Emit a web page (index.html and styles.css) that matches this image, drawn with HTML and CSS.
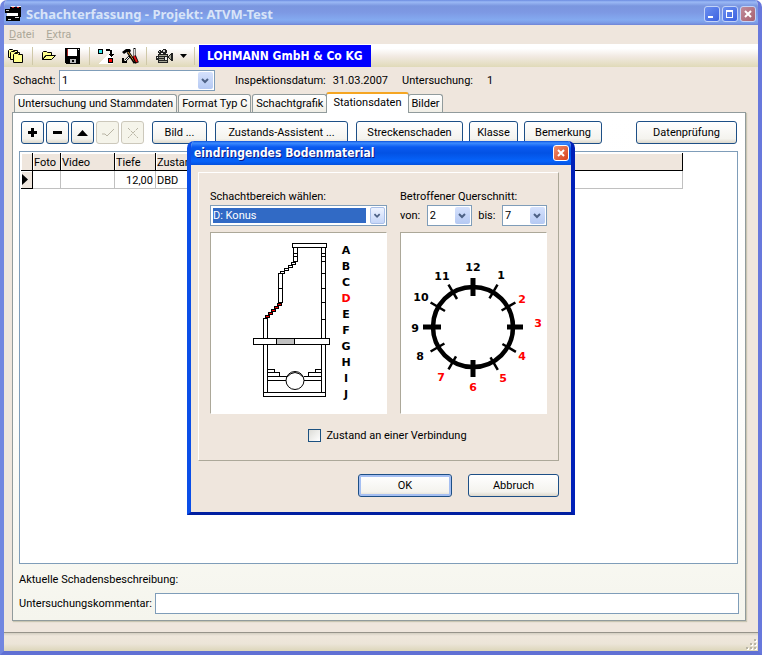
FILE: index.html
```html
<!DOCTYPE html>
<html lang="de">
<head>
    <meta charset="UTF-8">
    <meta name="viewport" content="width=device-width, initial-scale=1.0">
    <title>Schachterfassung - Projekt: ATVM-Test</title>
    <link rel="stylesheet" href="styles.css">
</head>
<body>
    <div class="window">
        <header class="titlebar">
            <svg class="app-icon" width="17" height="16" viewBox="0 0 17 16" shape-rendering="crispEdges">
                <path d="M5 1h11v3H5zM0 3h16v4H0z" fill="#000"/>
                <path d="M6 0h4v1H6zM12 0h4v1h-4z" fill="#eee"/>
                <path d="M7 1h2v1H7zM12 1h2v1h-2z" fill="#d22"/>
                <path d="M1 4h3v1H1z" fill="#ccc"/>
                <path d="M2 7h11v3H2z" fill="#fff"/>
                <path d="M13 7h3v4h-3z" fill="#000"/>
                <path d="M1 10h14v5H1z" fill="#000"/>
                <path d="M10 11h4v1h-4zM3 13h3v1H3z" fill="#ddd"/>
            </svg>
            <h1>Schachterfassung - Projekt: ATVM-Test</h1>
            <div class="window-buttons">
                <button class="win-btn" aria-label="Minimieren"><svg width="14" height="14" viewBox="0 0 14 14"><path d="M3 9h5v2H3z" fill="#fff"/></svg></button>
                <button class="win-btn" aria-label="Maximieren"><svg width="14" height="14" viewBox="0 0 14 14"><path d="M3 3h7v8H3zM4 5v5h5V5z" fill="#fff" fill-rule="evenodd"/></svg></button>
                <button class="win-btn win-close" aria-label="Schließen"><svg width="14" height="14" viewBox="0 0 14 14"><path d="M4 4l6 6M10 4l-6 6" stroke="#fff" stroke-width="2"/></svg></button>
            </div>
        </header>

        <nav class="menubar">
            <button disabled><u>D</u>atei</button>
            <button disabled><u>E</u>xtra</button>
        </nav>

        <div class="toolbar">
            <button aria-label="Projekte">
                <svg width="16" height="16" viewBox="0 0 16 16" fill="#ffff8c" stroke="#000">
                    <path d="M.5 9.500v-7l1-1h3l1 1h4v7z"/>
                    <path d="M2.500 11.500v-7l1-1h3l1 1h4v7z"/>
                    <path d="M5.500 14.500v-8l1-1h3l1 1h4v8z"/>
                </svg>
            </button>
            <span class="sep"></span>
            <button aria-label="Öffnen">
                <svg width="16" height="16" viewBox="0 0 16 16" fill="#ffff8c" stroke="#000">
                    <path d="M1.500 11.500v-7l1-1h3l1 1h4v3h-6z"/>
                    <path d="M1.500 11.500l4-4h9l-4 4z"/>
                </svg>
            </button>
            <button aria-label="Speichern">
                <svg width="16" height="16" viewBox="0 0 16 16" shape-rendering="crispEdges">
                    <path d="M0 0h15v16H1l-1-1z"/>
                    <path d="M3 1h9v7H3z" fill="#fff"/>
                    <path d="M2 1h1v7H2z" fill="#a22"/>
                    <path d="M13 1h1v1h-1z" fill="#ddd"/>
                    <path d="M5 11h6v4H5z" fill="#bbb"/>
                    <path d="M7 12h2v2H7z"/>
                </svg>
            </button>
            <span class="sep"></span>
            <button class="swap" aria-label="Übertragen">
                <svg width="16" height="16" viewBox="0 0 16 16" shape-rendering="crispEdges">
                    <path d="M0 16L15 2v14z" fill="#fff"/>
                    <path d="M.5 1.500h4v4h-4z" fill="#2fe5ea" stroke="#000"/>
                    <path d="M8 1h4v1h2v4h2l-3 3-3-3h2V3H8z"/>
                    <path d="M10.500 10.500h4v4h-4z" fill="#f00" stroke="#000"/>
                </svg>
            </button>
            <button class="tools" aria-label="Einstellungen">
                <svg width="17" height="16" viewBox="0 0 17 16">
                    <path d="M0 4l4-3h4l1 2-2 2-2-1-3 2z"/>
                    <path d="M6 4l7 11" stroke="#000" stroke-width="3"/>
                    <path d="M6 4l7 10" stroke="#e0a040" stroke-width="1"/>
                    <path d="M12.500 0v9" stroke="#000" stroke-width="2"/>
                    <path d="M12.500 1v7" stroke="#ddd"/>
                    <path d="M12 8l3 7" stroke="#000" stroke-width="4"/>
                    <path d="M12 8l3 6" stroke="#d11" stroke-width="2"/>
                    <path d="M8 8l-5 5M1 10v4h4" stroke="#000" stroke-width="2" fill="none"/>
                    <path d="M7 9l-4 4" stroke="#fff"/>
                </svg>
            </button>
            <span class="sep"></span>
            <button class="split" aria-label="Kamera">
                <svg width="17" height="15" viewBox="0 0 17 15" shape-rendering="crispEdges">
                    <path d="M3 1h2v1h1v2H5v1H3V4H2V2h1zM7 0h3v1h1v3h-1v1H7V4H6V1h1z" fill="#222"/>
                    <path d="M7 1h2v2H7zM3 2h1v1H3z" fill="#ccc"/>
                    <path d="M2 5h10v2l4-3h1v8h-1l-4-3v5H2v-3H0V7h2z" fill="#222"/>
                    <path d="M3 6h8v1H3zM3 8h5v1H3zM3 10h5v1H3zM3 12h8v1H3zM13 7h1v2h-1zM14 6h1v4h-1z" fill="#a5a595"/>
                    <path d="M9 8h2v3H9zM1 8h1v1H1z" fill="#eee"/>
                </svg>
                <svg width="7" height="4" viewBox="0 0 7 4"><path d="M0 0h7L3.500 4z"/></svg>
            </button>
            <span class="sep"></span>
            <strong class="company">LOHMANN GmbH &amp; Co KG</strong>
        </div>

        <div class="shaft-row">
            <label for="schacht">Schacht:</label>
            <span class="combo combo-shaft">
                <select id="schacht"><option>1</option></select>
                <svg class="arrow" viewBox="0 0 15 17"><path d="M4 7l3 3 3-3" fill="none" stroke="#4d6185" stroke-width="2"/></svg>
            </span>
            <span class="info date">Inspektionsdatum:</span>
            <span class="info">31.03.2007</span>
            <span class="info exam">Untersuchung:</span>
            <span class="info">1</span>
        </div>

        <main class="pages">
            <div class="tabs" role="tablist">
                <button role="tab">Untersuchung und Stammdaten</button>
                <button role="tab">Format Typ C</button>
                <button role="tab">Schachtgrafik</button>
                <button role="tab" class="active" aria-selected="true">Stationsdaten</button>
                <button role="tab">Bilder</button>
            </div>

            <section class="panel">
                <div class="actions">
                    <div class="nav-buttons">
                        <button class="btn icon" aria-label="Einfügen"><svg width="9" height="9" viewBox="0 0 9 9"><path d="M3 0h3v3h3v3H6v3H3V6H0V3h3z"/></svg></button>
                        <button class="btn icon" aria-label="Löschen"><svg width="9" height="9" viewBox="0 0 9 9"><path d="M0 3h9v3H0z"/></svg></button>
                        <button class="btn icon" aria-label="Bearbeiten"><svg width="11" height="6" viewBox="0 0 11 6"><path d="M5.500 0L11 6H0z"/></svg></button>
                        <button class="btn icon" disabled aria-label="Übernehmen"><svg width="14" height="10" viewBox="0 0 14 10"><path d="M1 6h3l2 2 7-7" fill="none" stroke="#b9b5a5"/></svg></button>
                        <button class="btn icon" disabled aria-label="Verwerfen"><svg width="12" height="12" viewBox="0 0 12 12"><path d="M1 1l10 10M11 1L1 11" fill="none" stroke="#b9b5a5" stroke-dasharray="3 1"/></svg></button>
                    </div>
                    <button class="btn image">Bild ...</button>
                    <button class="btn assistant">Zustands-Assistent ...</button>
                    <button class="btn damage">Streckenschaden</button>
                    <button class="btn class">Klasse</button>
                    <button class="btn remark">Bemerkung</button>
                    <button class="btn check">Datenprüfung</button>
                </div>

                <div class="grid">
                    <table>
                        <colgroup>
                            <col class="c-mark"><col class="c-foto"><col class="c-video"><col class="c-depth"><col>
                        </colgroup>
                        <thead>
                            <tr><th></th><th>Foto</th><th>Video</th><th>Tiefe</th><th>Zustand</th></tr>
                        </thead>
                        <tbody>
                            <tr>
                                <td class="mark"><svg width="6" height="11" viewBox="0 0 6 11"><path d="M0 0l6 5.500L0 11z"/></svg></td>
                                <td></td>
                                <td></td>
                                <td class="num">12,00</td>
                                <td>DBD</td>
                            </tr>
                        </tbody>
                    </table>
                </div>

                <p class="damage-text">Aktuelle Schadensbeschreibung:</p>
                <div class="comment">
                    <label for="kommentar">Untersuchungskommentar:</label>
                    <input type="text" id="kommentar">
                </div>
            </section>
        </main>

        <footer class="statusbar">
            <svg width="11" height="11" viewBox="0 0 11 11" shape-rendering="crispEdges">
                <path d="M9 1h2v2H9zM5 5h2v2H5zM9 5h2v2H9zM1 9h2v2H1zM5 9h2v2H5zM9 9h2v2H9z" fill="#fff"/>
                <path d="M8 0h2v2H8zM4 4h2v2H4zM8 4h2v2H8zM0 8h2v2H0zM4 8h2v2H4zM8 8h2v2H8z" fill="#b8b4a6"/>
            </svg>
        </footer>
    </div>

    <div class="overlay">
        <div class="dialog" role="dialog" aria-labelledby="dialog-title">
            <header class="dialog-title">
                <h2 id="dialog-title">eindringendes Bodenmaterial</h2>
                <button class="win-btn win-close" aria-label="Schließen"><svg width="14" height="14" viewBox="0 0 14 14"><path d="M4 4l6 6M10 4l-6 6" stroke="#fff" stroke-width="2"/></svg></button>
            </header>
            <div class="dialog-body">
                <div class="group">
                    <div class="columns">
                        <div class="column">
                            <label for="bereich">Schachtbereich wählen:</label>
                            <span class="combo combo-focus">
                                <select id="bereich"><option>D: Konus</option></select>
                                <svg class="arrow" viewBox="0 0 15 17"><path d="M4 7l3 3 3-3" fill="none" stroke="#4d6185" stroke-width="2"/></svg>
                            </span>
                            <div class="picture">
                                <svg width="175" height="180" viewBox="6 3 175 180">
                                    <g fill="#fff" stroke="#000" shape-rendering="crispEdges">
                                        <!-- Abdeckung und Hals -->
                                        <path d="M88.500 17.500h4v14h-4zM88.500 23.500h4M88.500 26.500h4"/>
                                        <path d="M116.500 17.500h4v91h-4zM116.500 23.500h4M116.500 26.500h4M116.500 31.500h4M116.500 43.500h4M116.500 58.500h4M116.500 72.500h4M116.500 89.500h4"/>
                                        <path d="M87.500 13.500h34v4h-34z"/>
                                        <path d="M86.500 32.500h4v2h-4zM83.500 35.500h4v2h-4zM79.500 38.500h4v2h-4zM75.500 41.500h4v2h-4z"/>
                                        <path d="M73.500 43.500h4v29h-4zM73.500 58.500h4"/>
                                        <!-- Konus -->
                                        <path fill="#f00" d="M72.500 73.500h4v2h-4zM69.500 76.500h4v2h-4zM66.500 79.500h4v2h-4zM63.500 82.500h4v2h-4zM60.500 85.500h4v2h-4z"/>
                                        <path d="M58.500 88.500h4v20h-4z"/>
                                        <!-- Unterteil -->
                                        <path d="M58.500 114.500h4v48h-4zM116.500 114.500h4v48h-4zM58.500 162.500h62v4h-62z"/>
                                        <path d="M48.500 108.500h76v6h-76z"/>
                                        <path fill="#c0c0c0" d="M71.500 108.500h18v6h-18z"/>
                                        <path fill="none" d="M62.500 139.500h7v3M62.500 142.500h12v4M62.500 146.500h19M62.500 150.500h19M116.500 139.500h-6v3M116.500 142.500h-13v4M116.500 146.500h-18M116.500 150.500h-18"/>
                                    </g>
                                    <circle cx="90" cy="150.500" r="9" fill="#fff" stroke="#000"/>
                                    <path d="M82 147q8-9 16 0" fill="none" stroke="#000"/>
                                    <g class="marks">
                                        <text x="141" y="24">A</text>
                                        <text x="141" y="40">B</text>
                                        <text x="141" y="56">C</text>
                                        <text x="141" y="72" class="hit">D</text>
                                        <text x="141" y="88">E</text>
                                        <text x="141" y="104">F</text>
                                        <text x="141" y="120">G</text>
                                        <text x="141" y="136">H</text>
                                        <text x="141" y="152">I</text>
                                        <text x="141" y="168">J</text>
                                    </g>
                                </svg>
                            </div>
                        </div>
                        <div class="column">
                            <span>Betroffener Querschnitt:</span>
                            <div class="range">
                                <label for="von">von:</label>
                                <span class="combo combo-hour">
                                    <select id="von"><option>2</option></select>
                                    <svg class="arrow" viewBox="0 0 15 17"><path d="M4 7l3 3 3-3" fill="none" stroke="#4d6185" stroke-width="2"/></svg>
                                </span>
                                <label for="bis">bis:</label>
                                <span class="combo combo-hour">
                                    <select id="bis"><option>7</option></select>
                                    <svg class="arrow" viewBox="0 0 15 17"><path d="M4 7l3 3 3-3" fill="none" stroke="#4d6185" stroke-width="2"/></svg>
                                </span>
                            </div>
                            <div class="picture">
                                <svg width="145" height="180" viewBox="6 3 145 180">
                                    <g stroke="#000" fill="none" transform="translate(78 97)">
                                        <circle r="40" stroke-width="4.500"/>
                                        <path stroke-width="5" d="M0-49v18M0 33v17M-50 0h18M34 0h16"/>
                                        <path stroke-width="2.500" d="M24.500-42.400L16.500-28.600M42.400-24.500L28.600-16.500M42.900 24.800L29.400 17M24.800 42.900L17.500 30.300M-24.500 42.400L-17 29.400M-42.400 24.500L-28.600 16.500M-42.400-24.500L-28-16M-24.500-42.400L-16-28"/>
                                    </g>
                                    <g class="marks">
                                        <text x="78" y="41">12</text>
                                        <text x="106" y="49">1</text>
                                        <text x="127" y="73" class="hit">2</text>
                                        <text x="143" y="97" class="hit">3</text>
                                        <text x="127" y="130" class="hit">4</text>
                                        <text x="108" y="152" class="hit">5</text>
                                        <text x="78" y="161" class="hit">6</text>
                                        <text x="46" y="151" class="hit">7</text>
                                        <text x="25" y="130">8</text>
                                        <text x="20" y="102">9</text>
                                        <text x="26" y="71">10</text>
                                        <text x="47" y="50">11</text>
                                    </g>
                                </svg>
                            </div>
                        </div>
                    </div>
                    <label class="joint"><input type="checkbox">Zustand an einer Verbindung</label>
                </div>
                <div class="dialog-buttons">
                    <button class="btn ok">OK</button>
                    <button class="btn cancel">Abbruch</button>
                </div>
            </div>
        </div>
    </div>
</body>
</html>
```
FILE: styles.css
```css
* {
    box-sizing: border-box;
}
body {
    margin: 0;
    background: #fff;
    color: #000;
    font-family: Roboto, "DejaVu Sans Condensed", sans-serif;
    font-size: 11px;
    line-height: 14px;
}
button, input, select {
    font: inherit;
    color: inherit;
    margin: 0;
}
button {
    padding: 0;
    white-space: nowrap;
}
svg {
    display: block;
}
h1, h2, p {
    margin: 0;
}

/* Hauptfenster */
.window {
    display: flex;
    flex-direction: column;
    min-height: 100vh;
    border: 4px solid #7286e0;
    border-top: 0;
    border-right-color: #6878dc;
    border-bottom-color: #6070d4;
    border-radius: 7px 7px 0 0;
    background: #efe6dd;
    overflow: hidden;
}
.titlebar {
    display: flex;
    align-items: center;
    height: 25px;
    margin: 0 -4px;
    padding: 3px 6px 0 5px;
    gap: 4px;
    background: linear-gradient(#6b8be0 0, #9bb9f5 2px, #7a96df 6px, #7d98e3 12px, #84aaf0 20px, #7b9be6 23px, #6f84d6 25px);
}
.titlebar h1, .dialog-title h2, .company {
    font-family: "DejaVu Sans Condensed", "DejaVu Sans", sans-serif;
    font-size: 12px;
    line-height: 18px;
}
.titlebar h1 {
    flex: 1;
    color: #d8e4f8;
    font-family: "Noto Sans", sans-serif;
    font-size: 13px;
}
.window-buttons {
    display: flex;
    gap: 2px;
}
.win-btn {
    width: 16px;
    height: 16px;
    border: 1px solid #c3d3f7;
    border-radius: 3px;
    background: linear-gradient(135deg, #6b8ff0, #3c62e0);
}
.win-close {
    background: linear-gradient(135deg, #c08c9c, #a8606e);
}
.menubar {
    display: flex;
    height: 19px;
    padding-left: 5px;
    gap: 12px;
}
.menubar button {
    border: 0;
    background: none;
    color: #aca899;
}

/* Symbolleiste */
.toolbar {
    display: flex;
    align-items: center;
    height: 23px;
    padding: 1px 0 0 4px;
    background: linear-gradient(#fff 20%, #f1e9e1 55%, #e0dab8);
}
.toolbar button {
    border: 0;
    background: none;
    margin-right: 8px;
}
.toolbar .tools {
    margin-right: 7px;
}
.toolbar .split {
    display: flex;
    align-items: center;
    gap: 7px;
    margin: 0 7px 0 1px;
}
.sep {
    width: 1px;
    height: 18px;
    margin-right: 8px;
    background: #cfc8a8;
}
.split + .sep {
    margin-right: 4px;
}
.company {
    padding: 2px 8px;
    background: #00f;
    color: #fff;
}

.shaft-row {
    display: flex;
    align-items: center;
    height: 26px;
    padding-left: 9px;
}
.shaft-row > label {
    width: 43px;
}
.shaft-row > label, .info {
    padding-top: 2px;
}
.shaft-row .date {
    margin: 0 7px 0 20px;
}
.shaft-row .exam {
    margin: 0 14px;
}

/* Auswahlfelder */
.combo {
    position: relative;
    display: block;
    height: 21px;
}
.combo select {
    display: block;
    width: 100%;
    height: 100%;
    padding: 2px 17px 0 2px;
    border: 1px solid #7f9db9;
    border-radius: 0;
    background: #fff;
    appearance: none;
}
.combo .arrow {
    position: absolute;
    top: 2px;
    right: 2px;
    width: 15px;
    height: 17px;
    border-radius: 2px;
    background: linear-gradient(#d5e1fc, #b5c9f3);
    pointer-events: none;
}
.combo-shaft {
    width: 156px;
    margin-left: 3px;
}
.combo-focus select {
    background: #316ac5;
    color: #fff;
    box-shadow: inset 0 0 0 2px #fff, inset -20px 0 0 #fff;
}
.combo-focus .arrow {
    border: 1px solid #a9bfe8;
    background: linear-gradient(#eef3ff, #c6d6f8);
}
.combo-hour {
    width: 45px;
}

/* Register */
.pages {
    flex: 1;
    display: flex;
    flex-direction: column;
    padding: 0 12px 11px 8px;
}
.tabs {
    display: flex;
    align-items: flex-end;
    height: 19px;
    padding-left: 2px;
    gap: 1px;
}
.tabs button {
    height: 18px;
    padding: 1px 3px 0;
    border: 1px solid #919b9c;
    border-bottom: 0;
    border-radius: 3px 3px 0 0;
    background: linear-gradient(#fff, #f0eee6);
}
.tabs .active {
    z-index: 1;
    height: 21px;
    margin: 0 -2px -1px;
    padding: 0 6px 2px;
    border-top: 2px solid #f5a623;
    background: #fff;
}
.panel {
    flex: 1;
    display: flex;
    flex-direction: column;
    padding: 8px 6px 6px 6px;
    border: 1px solid #919b9c;
    background: linear-gradient(#fff, #fdfdfb 60%, #f5f5ed);
    box-shadow: 1px 1px 1px #c9c5b2;
}
.btn {
    height: 23px;
    padding-top: 1px;
    border: 1px solid #1d4f86;
    border-radius: 3px;
    background: linear-gradient(#fff, #f4f3ee 80%, #dcd8cc);
}
.btn:disabled {
    border-color: #ccc8bb;
    background: #f5f4ea;
}
.btn.icon {
    display: grid;
    place-items: center;
    width: 23px;
    padding: 0;
}
.actions, .nav-buttons {
    display: flex;
}
.actions {
    padding: 0 2px;
}
.nav-buttons {
    gap: 2px;
}
.actions .btn.image { width: 55px; margin-left: 8px; }
.actions .btn.assistant { width: 133px; margin-left: 8px; }
.actions .btn.damage { width: 107px; margin-left: 8px; }
.actions .btn.class { width: 49px; margin-left: 6px; }
.actions .btn.remark { width: 78px; margin-left: 6px; }
.actions .btn.check { width: 101px; margin-left: auto; }

/* Tabelle */
.grid {
    flex: 1;
    margin: 7px 1px 8px 0;
    padding: 1px 54px 0 1px;
    border: 1px solid #7f9db9;
    background: #fff;
}
.grid table {
    width: 100%;
    table-layout: fixed;
    border-collapse: separate;
    border-spacing: 0;
}
.c-mark { width: 12px; }
.c-foto { width: 28px; }
.c-video { width: 54px; }
.c-depth { width: 41px; }
.grid th, .grid td {
    height: 18px;
    padding: 2px 2px 0 1px;
    border-right: 1px solid #c0c0c0;
    border-bottom: 1px solid #c0c0c0;
    text-align: left;
    white-space: nowrap;
    font-weight: normal;
}
.grid th, .grid .mark {
    border-color: #000;
    background: #efe6dd;
    box-shadow: inset 1px 1px 0 #fff;
}
.grid .mark {
    padding-top: 0;
}
.grid .num {
    text-align: right;
}

.damage-text {
    height: 21px;
    line-height: 16px;
}
.comment {
    display: flex;
    align-items: center;
    gap: 3px;
}
.comment input {
    flex: 1;
    height: 21px;
    border: 1px solid #7f9db9;
    background: #fff;
}
.statusbar {
    display: flex;
    justify-content: flex-end;
    align-items: flex-end;
    height: 19px;
    padding: 0 1px 1px 0;
    border-top: 1px solid #96938a;
    background: linear-gradient(#d4cfc2, #efe7dc 3px, #ece5d8 60%, #dcd6ba);
}

/* Dialog */
.overlay {
    position: absolute;
    inset: 0;
    z-index: 2;
    display: grid;
    place-items: center;
}
.dialog {
    border: 4px solid #0831d9;
    border-top: 0;
    border-left-color: #0a4ee8;
    border-right-color: #0020b8;
    border-bottom: 3px solid #001ea0;
    border-radius: 7px 7px 0 0;
    background: #efe6dd;
    overflow: hidden;
}
.dialog-title {
    display: flex;
    justify-content: space-between;
    align-items: center;
    height: 24px;
    margin: 0 -4px;
    padding: 1px 6px 0 7px;
    background: linear-gradient(#0b50d8 0, #3d8cff 2px, #0a5af0 6px, #0352e4 12px, #0663fa 20px, #0450dd 24px);
}
.dialog-title h2 {
    color: #fff;
    text-shadow: 1px 1px 0 #0a1883;
}
.dialog .win-close {
    border-color: #fff;
    background: linear-gradient(135deg, #f0906c, #d8401c);
}
.dialog-body {
    padding: 7px 12px 15px 7px;
}
.group {
    padding: 16px 11px 17px;
    border: 1px solid #aca899;
    border-top-color: #fff;
    border-left-color: #fff;
}
.columns {
    display: flex;
    gap: 13px;
}
.column {
    display: flex;
    flex-direction: column;
}
.column > label, .column > span:first-child {
    line-height: 16px;
}
.range {
    display: flex;
    align-items: center;
    justify-content: space-between;
}
.range label {
    padding-top: 2px;
}
.picture {
    margin-top: 6px;
    border: 1px solid #aca899;
    border-right-color: #fff;
    border-bottom-color: #fff;
    background: #fff;
}
.marks text {
    font-family: "DejaVu Sans", sans-serif;
    font-size: 11px;
    font-weight: bold;
    text-anchor: middle;
}
.marks .hit {
    fill: #f00;
}
.joint {
    display: flex;
    align-items: center;
    justify-content: center;
    gap: 5px;
    margin-top: 15px;
    padding-left: 18px;
}
.joint input {
    width: 13px;
    height: 13px;
    border: 1px solid #1c5180;
    background: linear-gradient(135deg, #dcdcd7, #fff);
    appearance: none;
}
.joint input:checked {
    background: #1c5180;
}
.dialog-buttons {
    display: flex;
    justify-content: flex-end;
    gap: 16px;
    margin-top: 13px;
}
.ok {
    width: 94px;
    box-shadow: inset 0 0 0 2px #a5bff2;
}
.cancel {
    width: 91px;
}
```
